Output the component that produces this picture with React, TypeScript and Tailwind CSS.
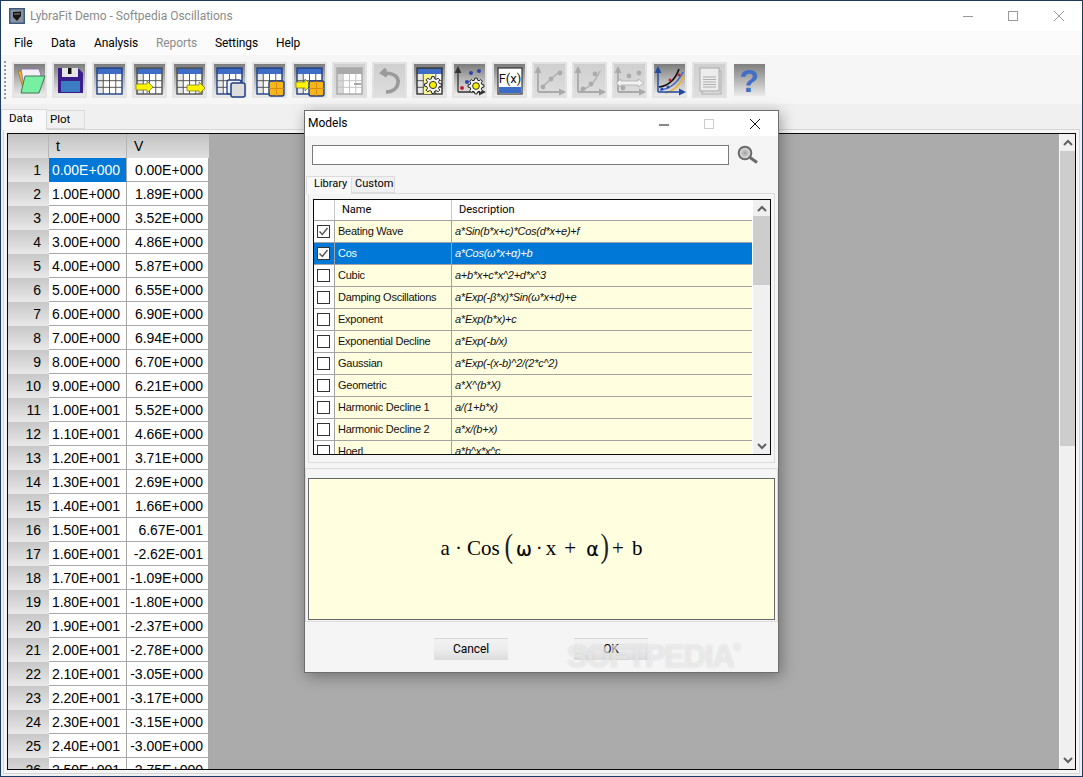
import React from "react";

const tableRows: [string, string][] = [
  ["0.00E+000", "0.00E+000"], ["1.00E+000", "1.89E+000"], ["2.00E+000", "3.52E+000"], ["3.00E+000", "4.86E+000"],
  ["4.00E+000", "5.87E+000"], ["5.00E+000", "6.55E+000"], ["6.00E+000", "6.90E+000"], ["7.00E+000", "6.94E+000"],
  ["8.00E+000", "6.70E+000"], ["9.00E+000", "6.21E+000"], ["1.00E+001", "5.52E+000"], ["1.10E+001", "4.66E+000"],
  ["1.20E+001", "3.71E+000"], ["1.30E+001", "2.69E+000"], ["1.40E+001", "1.66E+000"], ["1.50E+001", "6.67E-001"],
  ["1.60E+001", "-2.62E-001"], ["1.70E+001", "-1.09E+000"], ["1.80E+001", "-1.80E+000"], ["1.90E+001", "-2.37E+000"],
  ["2.00E+001", "-2.78E+000"], ["2.10E+001", "-3.05E+000"], ["2.20E+001", "-3.17E+000"], ["2.30E+001", "-3.15E+000"],
  ["2.40E+001", "-3.00E+000"], ["2.50E+001", "-2.75E+000"],
];

const models: [string, string][] = [
  ["Beating Wave", "a*Sin(b*x+c)*Cos(d*x+e)+f"], ["Cos", "a*Cos(ω*x+α)+b"], ["Cubic", "a+b*x+c*x^2+d*x^3"],
  ["Damping Oscillations", "a*Exp(-β*x)*Sin(ω*x+d)+e"], ["Exponent", "a*Exp(b*x)+c"], ["Exponential Decline", "a*Exp(-b/x)"],
  ["Gaussian", "a*Exp(-(x-b)^2/(2*c^2)"], ["Geometric", "a*X^(b*X)"], ["Harmonic Decline 1", "a/(1+b*x)"],
  ["Harmonic Decline 2", "a*x/(b+x)"], ["Hoerl", "a*b^x*x^c"],
];

function gearPath(cx: number, cy: number, r: number, teeth = 8) {
  const pts: string[] = [];
  const step = (Math.PI * 2) / teeth;
  for (let i = 0; i < teeth; i++) {
    const a = i * step;
    [[-0.3, 0.76], [-0.17, 1], [0.17, 1], [0.3, 0.76]].forEach(([o, k]) => {
      const t = a + o * step * 1.05;
      pts.push(`${(cx + Math.cos(t) * r * k).toFixed(2)} ${(cy + Math.sin(t) * r * k).toFixed(2)}`);
    });
  }
  return "M" + pts.join("L") + "Z";
}

function Gear({ cx, cy, r }: { cx: number; cy: number; r: number }) {
  return (
    <g>
      <path d={gearPath(cx, cy, r)} fill="#f4f4f4" stroke="#222" strokeWidth="1" />
      <circle cx={cx} cy={cy} r={r * 0.42} fill="#f7ef00" stroke="#333" strokeWidth="1" />
    </g>
  );
}

function Tbl({ x = 5, y = 6, w = 25, h = 26, c = "#1f3f86", head = "#3f6cc4", cols = 4, rows = 3, shade = "#e8e8e8", line = "#4a4a4a" }: {
  x?: number; y?: number; w?: number; h?: number; c?: string; head?: string; cols?: number; rows?: number; shade?: string; line?: string;
}) {
  const headH = 6;
  const cw = w / cols;
  const rh = (h - headH) / rows;
  return (
    <g>
      <rect x={x} y={y} width={w} height={h} fill="#fff" />
      <rect x={x} y={y + headH} width={cw} height={h - headH} fill={shade} />
      <rect x={x} y={y} width={w} height={headH} fill={head} />
      {Array.from({ length: cols - 1 }).map((_, i) => (
        <line key={i} x1={x + cw * (i + 1)} x2={x + cw * (i + 1)} y1={y + headH} y2={y + h} stroke={line} strokeWidth="0.9" />
      ))}
      {Array.from({ length: rows - 1 }).map((_, i) => (
        <line key={i} x1={x} x2={x + w} y1={y + headH + rh * (i + 1)} y2={y + headH + rh * (i + 1)} stroke={line} strokeWidth="0.9" />
      ))}
      <rect x={x} y={y} width={w} height={h} fill="none" stroke={c} strokeWidth="1.4" />
    </g>
  );
}

function Arrow({ x, y, w = 17, h = 10 }: { x: number; y: number; w?: number; h?: number }) {
  const m = y + h / 2;
  const b = x + w - 6;
  return (
    <path d={`M${x} ${y + 2}H${b}V${y - 1}L${x + w} ${m}L${b} ${y + h + 1}V${y + h - 2}H${x}Z`} fill="#fcf400" stroke="#6a6a20" strokeWidth="0.7" />
  );
}

function Orange({ x, y, s = 15 }: { x: number; y: number; s?: number }) {
  return (
    <g>
      <rect x={x} y={y} width={s} height={s} rx="2" fill="#f7b51c" stroke="#1f3f86" strokeWidth="1.4" />
      <line x1={x + s / 2} x2={x + s / 2} y1={y} y2={y + s} stroke="#d98e10" />
      <line x1={x} x2={x + s} y1={y + s / 2} y2={y + s / 2} stroke="#d98e10" />
    </g>
  );
}

function Axes({ color = "#a9a9a9", w = 1.8 }: { color?: string; w?: number }) {
  return (
    <g>
      <path d="M6 30V9M6 30H29" stroke={color} strokeWidth={w} fill="none" />
      <path d="M2.5 11L6 4L9.5 11Z M27 26.5L34 30L27 33.5Z" fill={color} />
    </g>
  );
}

function Dot({ x, y, c = "#ababab", r = 2.4 }: { x: number; y: number; c?: string; r?: number }) {
  return <circle cx={x} cy={y} r={r} fill={c} />;
}

const icons: { off?: boolean; bare?: boolean; g: React.ReactNode }[] = [
  { g: (<g>
    <path d="M6 9H16L19 26H11Z" fill="#f6b01e" stroke="#8a6a20" strokeWidth="0.6" />
    <path d="M9 7H27L29 13L24 30H13Z" fill="#f5f0f8" stroke="#8a70b0" strokeWidth="0.9" />
    <path d="M13 14H33L27 31H9Z" fill="#78f0a2" stroke="#3a6a50" strokeWidth="0.9" />
  </g>) },
  { g: (<g>
    <path d="M6 6H26L31 11V31H6Z" fill="#3a1d8a" />
    <rect x="9" y="19" width="19" height="11" fill="#3c7cc2" />
    <rect x="10" y="6" width="16" height="9" fill="#e6e6e6" />
    <rect x="16" y="6" width="3.5" height="6" fill="#111" />
  </g>) },
  { g: <Tbl /> },
  { g: (<g><Tbl c="#4d4d4d" /><Arrow x={4} y={20} /></g>) },
  { g: (<g><Tbl c="#4d4d4d" /><Arrow x={15} y={21} w={18} /></g>) },
  { g: (<g><Tbl />
    <rect x="15" y="18" width="14" height="14" rx="2" fill="#eee" stroke="#1f3f86" strokeWidth="1.3" />
    <rect x="19" y="21" width="14" height="14" rx="2" fill="#ddd" stroke="#1f3f86" strokeWidth="1.5" />
  </g>) },
  { g: (<g><Tbl /><Orange x={17} y={19} /></g>) },
  { g: (<g><Tbl /><Arrow x={4} y={18} w={15} /><Orange x={17} y={19} /></g>) },
  { off: true, g: (<g>
    <Tbl c="#a8a8a8" head="#a9a9a9" line="#c0c0c0" shade="#d8d8d8" />
    <rect x="22" y="21" width="7" height="2" fill="#a8a8a8" />
  </g>) },
  { off: true, g: (<path d="M14 7L10 11L15 14M12 11C22 11 27 15 26 21C25 27 20 30 14 30" fill="none" stroke="#9a9a9a" strokeWidth="3.6" />) },
  { g: (<g><Tbl c="#333" />
    <rect x="12" y="12" width="10" height="20" fill="#f7f48a" />
    <Gear cx={21} cy={23} r={8.5} />
  </g>) },
  { g: (<g><Axes color="#333" w={1.3} />
    <Dot x={10} y={26} c="#c02030" r={2} /><Dot x={15} y={20} c="#2a46a8" r={2} /><Dot x={19} y={11} c="#2a46a8" r={2} /><Dot x={27} y={9} c="#2a46a8" r={2} />
    <Gear cx={24} cy={24} r={8} />
  </g>) },
  { g: (<g>
    <rect x="6" y="6" width="24" height="26" fill="#fff" stroke="#333" strokeWidth="1.2" />
    <rect x="7" y="25" width="22" height="6" fill="#3a6cc8" />
    <text x="18" y="20.5" textAnchor="middle" fontFamily="Roboto, sans-serif" fontSize="13" fill="#111">F(x)</text>
  </g>) },
  { off: true, g: (<g><Axes />
    <path d="M9 26L28 9" stroke="#ababab" strokeWidth="1.2" /><Dot x={11} y={25} /><Dot x={19} y={17} /><Dot x={28} y={11} />
  </g>) },
  { off: true, g: (<g><Axes />
    <path d="M8 28C17 27 23 20 28 9" stroke="#ababab" strokeWidth="1.2" fill="none" /><Dot x={11} y={27} /><Dot x={19} y={22} /><Dot x={23} y={12} />
  </g>) },
  { off: true, g: (<g><Axes />
    <Dot x={17} y={14} /><Dot x={27} y={11} /><Dot x={11} y={26} />
    <path d="M4 21L9 17V19H26V17L32 21L26 25V23H9V25Z" fill="#f2f2f2" stroke="#a8a8a8" strokeWidth="0.7" />
  </g>) },
  { g: (<g>
    <path d="M7 25C16 24 23 18 27 7" stroke="#111" strokeWidth="1.7" fill="none" />
    <path d="M8 28C18 27 26 20 31 10" stroke="#3b62c0" strokeWidth="1.5" fill="none" />
    <path d="M13 31C22 29 29 22 32 14" stroke="#f0b020" strokeWidth="1.5" fill="none" />
    <Dot x={18} y={18} c="#c02030" r={1.5} /><Dot x={10} y={27} c="#2a46a8" r={1.5} /><Dot x={16} y={25} c="#2a46a8" r={1.5} /><Dot x={27} y={13} c="#c02030" r={1.5} />
    <Axes color="#1f4aa0" w={1.5} />
  </g>) },
  { off: true, g: (<g>
    <rect x="10" y="9" width="19" height="23" fill="#dcdcdc" stroke="#b0b0b0" />
    <rect x="8" y="6" width="19" height="23" fill="#ececec" stroke="#aaa" />
    <path d="M11 15H24M11 17.5H24M11 20H24M11 22.5H24M11 25H24" stroke="#a8a8a8" strokeWidth="0.9" />
  </g>) },
  { bare: true, g: (
    <text x="17" y="30" textAnchor="middle" fontFamily="'Liberation Sans', sans-serif" fontWeight="700" fontSize="32" fill="#3f6fc6">?</text>
  ) },
];

function Tile({ off, bare, children }: { off?: boolean; bare?: boolean; children: React.ReactNode }) {
  const bg = off
    ? "bg-gradient-to-b from-[#cfcfcf] to-[#dedede] border-[#e2e2e2]"
    : bare
      ? "bg-gradient-to-b from-[#7f7f7f] to-[#ebebeb] border-[#f4f4f4]"
      : "bg-gradient-to-b from-[#7c7c7c] via-[#b9b9b9] to-[#ececec] border-[#e4e4e4]";
  return (
    <div className={`w-[35px] h-[36px] border-2 ${bg} shrink-0`}>
      <svg width="35" height="36" viewBox="0 0 35 36" className="-m-[2px] block">
        {children}
      </svg>
    </div>
  );
}

function Chev({ up }: { up?: boolean }) {
  return (
    <svg width="10" height="7" viewBox="0 0 10 7">
      <path d={up ? "M1 6L5 2L9 6" : "M1 1L5 5L9 1"} fill="none" stroke="#606060" strokeWidth="2" />
    </svg>
  );
}

function Check({ on }: { on: boolean }) {
  return (
    <div className="w-[13px] h-[13px] border border-[#333] bg-white flex items-center justify-center">
      {on && (
        <svg width="11" height="11" viewBox="0 0 11 11">
          <path d="M1.5 5.5L4.3 8.5L9.5 2" fill="none" stroke="#555" strokeWidth="1.4" />
        </svg>
      )}
    </div>
  );
}

const ui = "font-['Roboto','Noto_Sans',sans-serif]";
const arial = "font-['Liberation_Sans',Arial,sans-serif]";

export default function App() {
  return (
    <div className={`relative w-[1083px] h-[777px] overflow-hidden flex flex-col bg-[#f0f0f0] border border-[#1f3a5f] ${ui}`}>
      {/* Title bar */}
      <div className="h-[30px] bg-white flex items-center shrink-0">
        <svg width="16" height="16" viewBox="0 0 16 16" className="ml-[8px]">
          <rect width="16" height="16" fill="#3d5a80" />
          <rect x="1.5" y="1.5" width="13" height="13" fill="#8a94a0" />
          <path d="M4 4L12 3.5V8L8 13L4 9Z" fill="#161616" />
          <path d="M5 5.5L11 5V6.5L5 7Z" fill="#666" />
        </svg>
        <span className="ml-[5px] text-[12px] text-[#8a8a8a]">LybraFit Demo - Softpedia Oscillations</span>
        <div className="ml-auto flex items-center">
          <svg width="12" height="12" viewBox="0 0 12 12" className="mr-[33px]"><path d="M1 6.5H11" stroke="#999" strokeWidth="1" /></svg>
          <svg width="12" height="12" viewBox="0 0 12 12" className="mr-[34px]"><rect x="1.5" y="1.5" width="9" height="9" fill="none" stroke="#999" /></svg>
          <svg width="12" height="12" viewBox="0 0 12 12" className="mr-[17px]"><path d="M1 1L11 11M11 1L1 11" stroke="#999" /></svg>
        </div>
      </div>
      {/* Menu */}
      <div className="h-[24px] bg-[#fbfbfb] flex items-center text-[12px] tracking-[-0.1px] text-black shrink-0">
        <span className="ml-[13px] w-[37px]">File</span>
        <span className="w-[43px]">Data</span>
        <span className="w-[62px]">Analysis</span>
        <span className="w-[59px] text-[#8c8c8c]">Reports</span>
        <span className="w-[61px]">Settings</span>
        <span>Help</span>
      </div>
      {/* Toolbar */}
      <div className="h-[49px] bg-[#f6f6f6] flex items-center shrink-0">
        <div className="ml-[3px] w-[2px] h-[38px] border-l-2 border-dotted border-[#9a9a9a]" />
        <div className="ml-[6px] flex gap-[5px]">
          {icons.map((ic, i) => (
            <Tile key={i} off={ic.off} bare={ic.bare}>{ic.g}</Tile>
          ))}
        </div>
      </div>
      {/* Tabs */}
      <div className="h-[25px] bg-[#f0f0f0] flex items-end text-[11.5px] shrink-0 relative z-10">
        <div className="w-[46px] h-[21px] bg-[#f8f8f8] border border-b-0 border-[#d9d9d9] pl-[7px] pb-[3px] flex items-center -mb-[1px]">Data</div>
        <div className="w-[38px] h-[19px] bg-[#f0f0f0] border border-l-0 border-[#d9d9d9] pl-[3px] flex items-center">Plot</div>
      </div>
      {/* Tab page */}
      <div className="flex-1 min-h-0 mx-[2px] mb-[2px] border border-[#d6d6d6] bg-[#f5f5f5] p-[3px]">
        <div className="h-full border border-[#0a0a0a] flex overflow-hidden bg-[#ababab]">
          <div className={`w-[201px] shrink-0 ${arial} text-[14px] text-black`}>
            <div className="flex h-[24px]">
              <div className="w-[41px] bg-gradient-to-b from-[#c2c2c2] to-[#e0e0e0] border-r border-[#b5b5b5]" />
              <div className="w-[78px] bg-gradient-to-b from-[#c2c2c2] to-[#e0e0e0] border-r border-[#b5b5b5] pl-[7px] flex items-center">t</div>
              <div className="w-[82px] bg-gradient-to-b from-[#c2c2c2] to-[#e0e0e0] pl-[7px] flex items-center">V</div>
            </div>
            {tableRows.map((r, i) => (
              <div key={i} className="flex h-[24px]">
                <div className="w-[41px] bg-gradient-to-b from-[#c8c8c8] to-[#e8e8e8] flex items-center justify-end pr-[8px] pt-[1px]">{i + 1}</div>
                <div className={`w-[78px] ${i === 0 ? "bg-[#0078d7] text-white border-b-[#0078d7]" : "bg-white border-b-[#a8a8a8]"} border-r border-r-[#a8a8a8] border-b flex items-center justify-end pr-[6px] pt-[1px]`}>{r[0]}</div>
                <div className="w-[82px] bg-white border-r border-b border-[#a8a8a8] flex items-center justify-end pr-[5px] pt-[1px]">{r[1]}</div>
              </div>
            ))}
          </div>
          <div className="flex-1" />
          <div className="w-[16px] shrink-0 bg-[#f0f0f0] flex flex-col border-l border-[#f8f8f8]">
            <div className="h-[17px] flex items-center justify-center"><Chev up /></div>
            <div className="h-[295px] bg-[#cdcdcd]" />
            <div className="flex-1" />
            <div className="h-[17px] flex items-center justify-center"><Chev /></div>
          </div>
        </div>
      </div>

      {/* Models dialog */}
      <div className="absolute left-[303px] top-[109px] w-[475px] h-[563px] bg-[#f5f5f5] border border-[#6e6e6e] shadow-[2px_3px_14px_rgba(0,0,0,0.35)] flex flex-col z-20">
        <div className="h-[25px] bg-white flex items-center shrink-0">
          <span className="ml-[3px] pb-[1px] text-[12px] text-black">Models</span>
          <div className="ml-auto flex items-center">
            <svg width="12" height="12" viewBox="0 0 12 12" className="mr-[33px]"><path d="M1 7H11" stroke="#111" strokeWidth="1" /></svg>
            <svg width="12" height="12" viewBox="0 0 12 12" className="mr-[34px]"><rect x="1.5" y="1.5" width="9" height="9" fill="none" stroke="#ccc" /></svg>
            <svg width="12" height="12" viewBox="0 0 12 12" className="mr-[17px]"><path d="M1 1L11 11M11 1L1 11" stroke="#111" /></svg>
          </div>
        </div>
        <div className="flex items-center mt-[9px] ml-[7px] h-[20px] shrink-0">
          <div className="w-[417px] h-[20px] bg-white border border-[#7a7a7a]" />
          <svg width="22" height="20" viewBox="0 0 22 20" className="ml-[8px]">
            <defs>
              <radialGradient id="lens"><stop offset="0" stopColor="#a0a0a0" /><stop offset="1" stopColor="#e8e8e8" /></radialGradient>
            </defs>
            <circle cx="8" cy="8" r="6.3" fill="url(#lens)" stroke="#6a6a6a" strokeWidth="2" />
            <path d="M13 12.5L20 17.5" stroke="#6a6a6a" strokeWidth="3" />
          </svg>
        </div>
        <div className="flex items-end ml-[1px] mt-[10px] text-[11px] h-[18px] shrink-0 relative z-10">
          <div className="w-[46px] h-[18px] bg-[#f8f8f8] border border-b-0 border-[#dcdcdc] pl-[7px] pb-[2px] flex items-center -mb-[1px]">Library</div>
          <div className="w-[43px] h-[17px] bg-[#f0f0f0] border border-l-0 border-[#dcdcdc] pl-[3px] flex items-center">Custom</div>
        </div>
        <div className="mx-[3px] h-[270px] border border-[#dcdcdc] pt-[5px] pl-[4px] pr-[3px] shrink-0">
          <div className="h-[256px] border border-[#0a0a0a] flex overflow-hidden bg-white">
            <div className={`flex-1 min-w-0 ${arial} text-[11px] tracking-[-0.25px]`}>
              <div className={`flex h-[20px] ${ui} text-[11px] tracking-normal`}>
                <div className="w-[21px] border-r border-[#c8c8c8]" />
                <div className="w-[117px] border-r border-[#c8c8c8] pl-[7px] pt-[1px] flex items-center">Name</div>
                <div className="flex-1 pl-[7px] pt-[1px] flex items-center">Description</div>
              </div>
              {models.map((m, i) => {
                const sel = i === 1;
                return (
                  <div key={i} className={`flex h-[22px] border-t border-[#a3a3a3] ${sel ? "bg-[#0078d7] text-white" : "bg-[#ffffe0] text-[#111]"}`}>
                    <div className={`w-[21px] ${sel ? "bg-[#0078d7]" : "bg-white"} border-r border-[#a3a3a3] pr-[1px] flex items-center justify-center shrink-0`}>
                      <Check on={i < 2} />
                    </div>
                    <div className="w-[117px] border-r border-[#a3a3a3] pl-[3px] flex items-center shrink-0 overflow-hidden whitespace-nowrap">{m[0]}</div>
                    <div className="flex-1 pl-[3px] flex items-center italic whitespace-nowrap">{m[1]}</div>
                  </div>
                );
              })}
            </div>
            <div className="w-[17px] bg-[#f0f0f0] flex flex-col shrink-0 ml-[1px]">
              <div className="h-[16px] flex items-center justify-center"><Chev up /></div>
              <div className="h-[69px] bg-[#cdcdcd]" />
              <div className="flex-1" />
              <div className="h-[16px] flex items-center justify-center"><Chev /></div>
            </div>
          </div>
        </div>
        <div className="mt-[5px] h-[154px] border border-[#dcdcdc] px-[2px] pt-[9px] shrink-0">
          <div className="h-[142px] bg-[#ffffe0] border border-[#666] flex items-center justify-center font-['Liberation_Serif','Times_New_Roman',serif] text-[21px] text-black">
            <span>a</span>
            <span className="ml-[5px]">·</span>
            <span className="ml-[5px]">Cos</span>
            <span className="ml-[3px] text-[34px] leading-none -mt-[6px] scale-x-75 text-[#222]">(</span>
            <span className="font-['DejaVu_Sans',sans-serif] text-[19px] ml-[2px] [-webkit-text-stroke:0.2px_#000]">ω</span>
            <span className="ml-[4px]">·</span>
            <span className="ml-[3px]">x</span>
            <span className="ml-[8px]">+</span>
            <span className="font-['DejaVu_Sans',sans-serif] text-[19px] ml-[10px] [-webkit-text-stroke:0.2px_#000]">α</span>
            <span className="text-[34px] leading-none -mt-[6px] scale-x-75 text-[#222]">)</span>
            <span className="ml-[2px]">+</span>
            <span className="ml-[8px]">b</span>
          </div>
        </div>
        <div className="flex mt-[16px] ml-[129px] gap-[66px] text-[12px] tracking-[-0.1px] text-black shrink-0">
          <div className="w-[74px] h-[22px] pb-[1px] flex items-center justify-center bg-gradient-to-b from-[#f2f2f2] via-[#ececec] to-[#dcdcdc] border-t border-[#d8d8d8]">Cancel</div>
          <div className="w-[74px] h-[22px] pb-[1px] flex items-center justify-center bg-gradient-to-b from-[#f2f2f2] via-[#ececec] to-[#dcdcdc] border-t border-[#d8d8d8]">OK</div>
        </div>
      </div>

      {/* Watermark */}
      <div className="absolute left-[566px] top-[637px] z-30 flex items-start text-white/50 font-['Liberation_Sans',sans-serif] font-bold text-[31px] tracking-[-1.2px] leading-[38px] [text-shadow:0_0_2px_rgba(150,150,150,0.4)]">
        SOFTPEDIA<span className="text-[10px] leading-[14px] mt-[3px] tracking-normal">®</span>
      </div>
    </div>
  );
}
